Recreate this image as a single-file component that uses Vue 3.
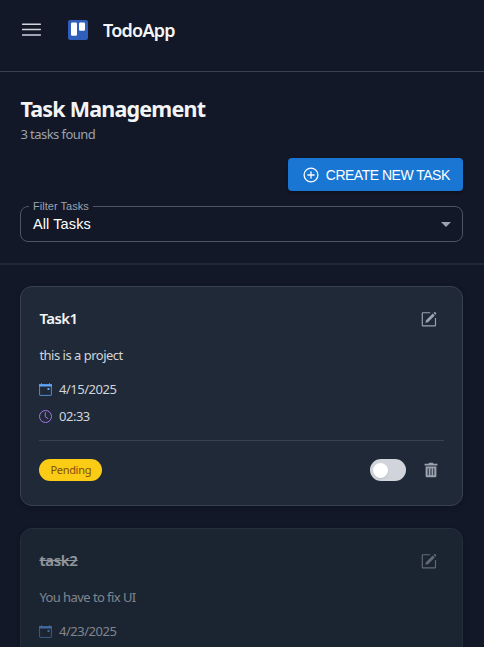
<script setup>
const tasks = [
  { id: 1, title: 'Task1', text: 'this is a project', date: '4/15/2025', time: '02:33', status: 'Pending', done: false },
  { id: 2, title: 'task2', text: 'You have to fix UI', date: '4/23/2025', time: '', status: '', done: true },
]
</script>

<template>
  <div class="app">
    <header class="topbar">
      <svg class="menu" width="20" height="14" viewBox="0 0 20 14"><path d="M.7 1.3h17.6M.7 6.5h17.6M.7 12h17.6" fill="none" stroke="#d1d5db" stroke-width="1.6" stroke-linecap="round" /></svg>
      <svg class="logo" width="20" height="20" viewBox="0 0 20 20">
        <rect width="20" height="20" rx="2.2" fill="#2f5fba" />
        <rect x="3" y="2.4" width="6" height="13.4" rx="1.3" fill="#fff" />
        <rect x="11" y="2.4" width="6" height="8.4" rx="1.3" fill="#fff" />
      </svg>
      <span class="brand">TodoApp</span>
    </header>

    <section class="intro">
      <h1>Task Management</h1>
      <p class="count">3 tasks found</p>
      <button class="create">
        <svg width="16" height="16" viewBox="0 0 16 16" fill="none" stroke="#fff" stroke-width="1.3" stroke-linecap="round"><circle cx="8" cy="8" r="6.9" /><path d="M8 4.9v6.2M4.9 8h6.2" /></svg>
        <span>CREATE NEW TASK</span>
      </button>
      <fieldset class="select">
        <legend>Filter Tasks</legend>
        <div class="value">
          <span>All Tasks</span>
          <svg width="10" height="5" viewBox="0 0 10 5"><path d="M0 0h10L5 5z" fill="#9ca3af" /></svg>
        </div>
      </fieldset>
    </section>

    <main class="list">
      <article v-for="t in tasks" :key="t.id" class="card" :class="{ done: t.done }">
        <div class="head">
          <h2>{{ t.title }}</h2>
          <svg class="edit" width="16" height="16" viewBox="0 0 16 16">
            <path d="M9.2 1.7H1.9a.6.6 0 0 0-.6.6v12a.6.6 0 0 0 .6.6h12a.6.6 0 0 0 .6-.6V7" fill="none" stroke="#9ca3af" stroke-width="1.15" />
            <path d="M4.4 11.8l.6-2.5 6.8-6.8 2 2L7 11.3zM12.5 1.9l.9-.9c.7-.5 2.4.9 1.8 1.9l-.8.9z" fill="#9ca3af" />
          </svg>
        </div>
        <p class="desc">{{ t.text }}</p>
        <div class="meta">
          <svg width="13" height="13" viewBox="0 0 13 13"><path d="M.6 1.8h11.8v10.1a.5.5 0 0 1-.5.5H1.1a.5.5 0 0 1-.5-.5z" fill="none" stroke="#60a5fa" stroke-opacity=".8" /><path d="M0 1.2h2V.3h1v.9h7V.3h1v.9h2v2.3H0z" fill="#60a5fa" /><path d="M8.5 5h2v2h-2z" fill="#60a5fa" /></svg>
          <span>{{ t.date }}</span>
        </div>
        <div v-if="t.time" class="meta time">
          <svg width="13" height="13" viewBox="0 0 13 13" fill="none" stroke="#a974e8"><circle cx="6.5" cy="6.5" r="6" /><path d="M6.3 2.6v4.2l2.5 1.6" stroke-linecap="round" /></svg>
          <span>{{ t.time }}</span>
        </div>
        <footer v-if="t.status" class="foot">
          <span class="badge">{{ t.status }}</span>
          <span class="switch"><i /></span>
          <svg class="trash" width="14" height="16" viewBox="0 0 14 16">
            <path d="M.6 1.8h3.8L5.3.8h3.4l.9 1h3.8v1.7H.6z" fill="#9ca3af" />
            <path fill-rule="evenodd" d="M1.6 4.4h10.8v9.5a1.4 1.4 0 0 1-1.4 1.4H3a1.4 1.4 0 0 1-1.4-1.4zM3.7 6.2v7h1v-7zM6.5 6.2v7h1v-7zM9.3 6.2v7h1v-7z" fill="#9ca3af" />
          </svg>
        </footer>
      </article>
    </main>
  </div>
</template>

<style>
body { background: #111827; }
</style>

<style scoped>
.app { box-sizing: border-box; height: 647px; overflow: hidden; background: #121827; color: #f3f4f6; font-family: "Noto Sans", sans-serif; }
h1, h2, p { margin: 0; }
svg { display: block; flex: none; }
.topbar { box-sizing: border-box; height: 72px; border-bottom: 1px solid #374151; display: flex; align-items: flex-start; padding: 20px 22px; }
.menu { margin-top: 3px; }
.logo { margin-left: 26px; }
.brand { margin-left: 15px; font-size: 18px; line-height: 21px; font-weight: 600; letter-spacing: -0.75px; }
.intro { box-sizing: border-box; height: 193px; border-bottom: 2px solid #1f2937; padding: 22px 20.6px 0 20.4px; display: flex; flex-direction: column; }
h1 { font-size: 21.5px; line-height: 29px; font-weight: 700; letter-spacing: -0.8px; }
.count { margin-top: 1px; font-size: 13px; line-height: 20px; color: #9ca3af; letter-spacing: -0.55px; }
.create { align-self: flex-end; margin-top: 14px; width: 175px; height: 33px; border: 0; border-radius: 4px; padding: 0 0 0 14.4px; background: #1976d2; color: #fff; display: flex; align-items: center; gap: 7px; font: 14px "Liberation Sans", Arial, sans-serif; letter-spacing: -0.5px; white-space: nowrap; box-shadow: 0 2px 3px rgba(0,0,0,.3); }
.select { box-sizing: border-box; height: 42px; margin: 9px 0 0; min-width: 0; border: 1px solid #4b5563; border-radius: 8px; padding: 0 11px 0 7.6px; font-family: "Liberation Sans", Arial, sans-serif; }
.select legend { padding: 0 4px; font-size: 11px; line-height: 12px; color: #9ca3af; letter-spacing: .04px; }
.value { display: flex; align-items: center; justify-content: space-between; padding-left: 4px; height: 24px; font-size: 14.5px; letter-spacing: .1px; color: #fff; }
.list { padding: 21px 20.6px 0 20.4px; display: flex; flex-direction: column; gap: 22px; }
.card { box-sizing: border-box; height: 220px; flex: none; border: 1px solid #374151; border-radius: 12px; background: #1f2937; padding: 18px 18px 0; box-shadow: 0 2px 5px rgba(0,0,0,.18); }
.head { display: flex; justify-content: space-between; height: 28px; }
h2 { font-size: 15px; line-height: 27px; font-weight: 600; letter-spacing: -0.55px; }
.edit { margin: 6px 7px 0 0; }
.desc { margin-top: 12px; font-size: 13px; line-height: 20px; color: #d1d5db; letter-spacing: -0.5px; }
.done .desc { letter-spacing: -0.57px; }
.meta { display: flex; align-items: center; gap: 6.6px; height: 20px; margin-top: 14px; font-size: 13px; color: #d1d5db; letter-spacing: -0.48px; }
.meta.time { margin-top: 7px; }
.foot { margin-top: 14px; border-top: 1px solid #374151; padding-top: 18px; display: flex; align-items: center; }
.badge { height: 22px; padding: 0 11px; border-radius: 11px; background: #facc15; color: #854d0e; font-size: 11px; line-height: 22px; letter-spacing: -0.3px; }
.switch { margin-left: auto; width: 36px; height: 22px; border-radius: 11px; background: #d1d5db; display: flex; align-items: center; padding-left: 3px; box-sizing: border-box; }
.switch i { width: 15px; height: 15px; border-radius: 50%; background: #fff; box-shadow: 0 1px 2px rgba(0,0,0,.12); }
.trash { margin: 0 6px 0 18px; }
.done { background: #1b2431; border-color: #242e3c; }
.done > * { opacity: .55; }
.done h2 { text-decoration: line-through; letter-spacing: -0.3px; }
</style>
